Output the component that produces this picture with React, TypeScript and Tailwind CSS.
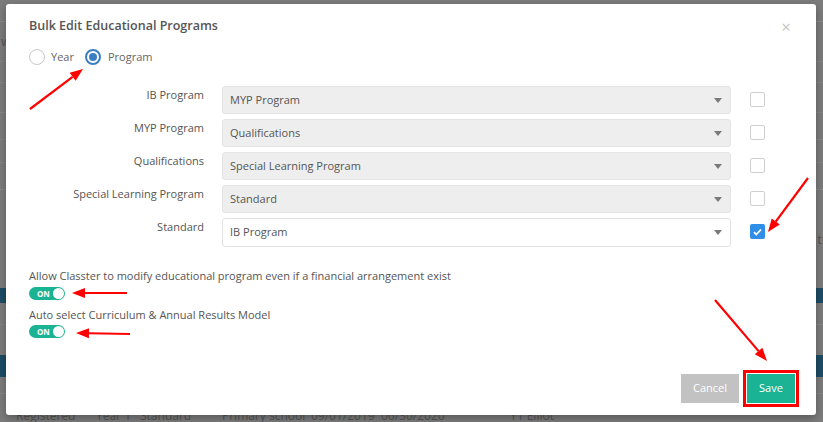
import React from "react";

const ROWS = [
  { label: "IB Program", value: "MYP Program", disabled: true, checked: false },
  { label: "MYP Program", value: "Qualifications", disabled: true, checked: false },
  { label: "Qualifications", value: "Special Learning Program", disabled: true, checked: false },
  { label: "Special Learning Program", value: "Standard", disabled: true, checked: false },
  { label: "Standard", value: "IB Program", disabled: false, checked: true },
];

const FONT = { fontFamily: '"Open Sans", "Noto Sans", sans-serif' };

function Backdrop() {
  return (
    <div className="flex h-[422px] w-[823px] flex-col overflow-hidden bg-[#7c7c7c] text-[13px] text-[#555] *:shrink-0">
      <div className="h-[22px] border-b border-[#8a8a8a]" />
      <div className="h-[40px] border-b border-[#858585] pl-[1px] pt-[10px]">w</div>
      <div className="h-[21px] border-b border-[#858585]" />
      <div className="h-[30px] border-b border-[#858585]" />
      <div className="h-[27px] border-b border-[#858585]" />
      <div className="h-[23px] border-b border-[#858585]" />
      <div className="h-[27px] border-b border-dotted border-[#8f8f8f]" />
      <div className="flex h-[98px] justify-end pt-[40px] pr-[1px]">t</div>
      <div className="h-[15px] bg-[#1d4c66]" />
      <div className="h-[22px] border-b border-[#858585]" />
      <div className="h-[30px]" />
      <div className="h-[22px] bg-[#1d4c66]" />
      <div className="h-[17px] border-b border-[#858585]" />
      <div className="flex whitespace-nowrap pl-[16px] pt-[14px] text-[12px] leading-[16px] *:shrink-0">
        <span className="w-[80px]">Registered</span>
        <span className="w-[44px]">Year 1</span>
        <span className="w-[82px]">Standard</span>
        <span className="w-[89px]">Primary school</span>
        <span className="w-[70px]">09/01/2019</span>
        <span className="w-[129px]">06/30/2020</span>
        <span>Y1 Elliot</span>
      </div>
    </div>
  );
}

function Caret() {
  return (
    <svg width="8" height="5" viewBox="0 0 8 5" className="shrink-0">
      <path d="M0 0h8L4 5z" fill="#7a7a7a" />
    </svg>
  );
}

function Toggle() {
  return (
    <div className="flex h-[13px] w-[36px] items-center justify-between rounded-full bg-[#1ab394] pl-[8px] pr-[1px]">
      <span className="text-[8px] font-bold leading-none text-white">ON</span>
      <span className="h-[11px] w-[11px] rounded-full bg-white" />
    </div>
  );
}

function Arrows() {
  const arrow = (x1: number, y1: number, x2: number, y2: number, key: string) => {
    const a = Math.atan2(y2 - y1, x2 - x1);
    const len = 13;
    const w = 5;
    const bx = x2 - len * Math.cos(a);
    const by = y2 - len * Math.sin(a);
    const px = -Math.sin(a) * w;
    const py = Math.cos(a) * w;
    return (
      <g key={key}>
        <line x1={x1} y1={y1} x2={bx} y2={by} stroke="#f00" strokeWidth={2.2} />
        <polygon points={`${x2},${y2} ${bx + px},${by + py} ${bx - px},${by - py}`} fill="#f00" />
      </g>
    );
  };
  return (
    <svg className="pointer-events-none absolute left-0 top-0" width="823" height="422">
      {arrow(30, 109, 83, 69, "a")}
      {arrow(808, 178, 768, 232, "b")}
      {arrow(127, 293, 72, 293, "c")}
      {arrow(130, 334, 76, 333, "d")}
      {arrow(715, 300, 767, 361, "e")}
    </svg>
  );
}

export default function App() {
  return (
    <div className="relative h-[422px] w-[823px] overflow-hidden" style={FONT}>
      <Backdrop />
      <div className="absolute left-[6px] top-[4px] flex h-[411px] w-[810px] flex-col rounded-[3px] bg-white pl-[23px] pr-[21px] shadow-[0_3px_9px_rgba(0,0,0,0.3)]">
        <div className="mt-[12px] flex h-[20px] items-center justify-between">
          <h4 className="text-[12.5px] font-semibold leading-[20px] text-[#555]">Bulk Edit Educational Programs</h4>
          <span className="mr-[4px] text-[17px] leading-none text-[#c5c5c5]">×</span>
        </div>

        <div className="mt-[13px] flex h-[16px] items-center text-[11px] text-[#666]">
          <span className="h-[16px] w-[16px] rounded-full border border-[#c8c8c8]" />
          <span className="ml-[6px]">Year</span>
          <span className="ml-[11px] flex h-[16px] w-[16px] items-center justify-center rounded-full border-2 border-[#3a7fc1]">
            <span className="h-[8px] w-[8px] rounded-full bg-[#3a7fc1]" />
          </span>
          <span className="ml-[7px]">Program</span>
        </div>

        <div className="mt-[21px] flex flex-col gap-[5px]">
          {ROWS.map((r) => (
            <div key={r.label} className="flex items-start">
              <label className="w-[175px] pt-[1px] text-right text-[11px] leading-[15px] text-[#555]">{r.label}</label>
              <div
                className={
                  r.disabled
                    ? "ml-[18px] flex h-[28px] w-[509px] items-center justify-between rounded-[3px] border border-[#e4e4e4] bg-[#eeeeee] pl-[7px] pr-[8px] text-[11px] text-[#555]"
                    : "ml-[18px] flex h-[29px] w-[509px] items-center justify-between rounded-[3px] border border-[#e2e2e2] bg-white pl-[7px] pr-[8px] text-[11px] text-[#555]"
                }
              >
                <span>{r.value}</span>
                <Caret />
              </div>
              <div className="ml-[19px] mt-[6px]">
                {r.checked ? (
                  <span className="flex h-[15px] w-[15px] items-center justify-center rounded-[2px] bg-[#2e8ee8]">
                    <svg width="9" height="8" viewBox="0 0 9 8">
                      <path d="M1 4.2l2.3 2.3L8 1.5" fill="none" stroke="#fff" strokeWidth="1.8" />
                    </svg>
                  </span>
                ) : (
                  <span className="block h-[15px] w-[15px] rounded-[2px] border border-[#cfcfcf] bg-white" />
                )}
              </div>
            </div>
          ))}
        </div>

        <div className="mt-[21px] text-[11px] leading-[15px] text-[#555]">
          Allow Classter to modify educational program even if a financial arrangement exist
        </div>
        <div className="mt-[4px]">
          <Toggle />
        </div>
        <div className="mt-[7px] text-[11px] leading-[15px] text-[#555]">Auto select Curriculum &amp; Annual Results Model</div>
        <div className="mt-[3px]">
          <Toggle />
        </div>

        <div className="mt-auto mb-[12px] flex justify-end gap-[8px]">
          <button className="h-[29px] w-[58px] bg-[#c2c2c2] text-[11px] text-white">Cancel</button>
          <button className="h-[29px] w-[48px] bg-[#1ab394] text-[11px] text-white outline-[3px] outline-offset-[1px] outline-[#f00] outline-solid">
            Save
          </button>
        </div>
      </div>
      <Arrows />
    </div>
  );
}
